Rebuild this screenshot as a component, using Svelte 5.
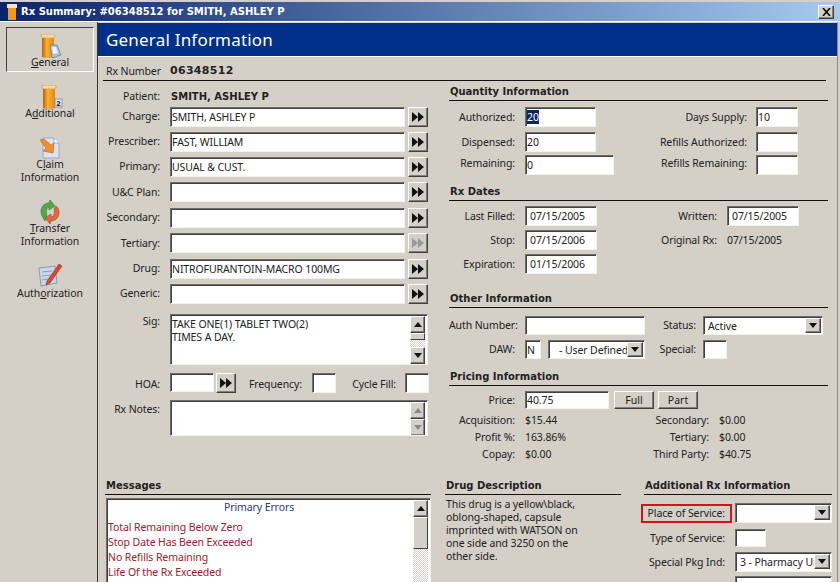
<script>
  const leftRows = [
    { label: 'Charge:', value: 'SMITH, ASHLEY P', cls: 'r25' },
    { label: 'Prescriber:', value: 'FAST, WILLIAM', cls: 'r25' },
    { label: 'Primary:', value: 'USUAL & CUST.', cls: 'r25' },
    { label: 'U&C Plan:', value: '', cls: 'r26' },
    { label: 'Secondary:', value: '', cls: 'r25' },
    { label: 'Tertiary:', value: '', cls: 'r26', off: true },
    { label: 'Drug:', value: 'NITROFURANTOIN-MACRO 100MG', cls: 'r25' },
    { label: 'Generic:', value: '', cls: 'r25' }
  ];
  const errors = ['Total Remaining Below Zero', 'Stop Date Has Been Exceeded', 'No Refills Remaining', 'Life Of the Rx Exceeded'];
</script>

{#snippet dbl(off)}
  <button class="btn go" class:off aria-label="next">
    <svg width="12" height="10" viewBox="0 0 12 10"><path d="M0 0l6 5-6 5zM6 0l6 5-6 5z" /></svg>
  </button>
{/snippet}
{#snippet arrow(dir, off)}
  <span class="sb" class:off>
    <svg width="8" height="5" viewBox="0 0 8 5"><path d={dir === 'up' ? 'M0 5l4-5 4 5z' : 'M0 0l4 5 4-5z'} /></svg>
  </span>
{/snippet}
{#snippet dd()}
  <span class="sb dd"><svg width="8" height="5" viewBox="0 0 8 5"><path d="M0 0l4 5 4-5z" /></svg></span>
{/snippet}
{#snippet bottle(badge)}
  <svg class="ico" width="26" height="25" viewBox="0 0 26 25">
    <defs>
      <linearGradient id="org" x1="0" x2="1" y1="0" y2="0">
        <stop offset="0" stop-color="#b8620a" /><stop offset=".4" stop-color="#fdb02e" /><stop offset="1" stop-color="#e08812" />
      </linearGradient>
    </defs>
    {#if badge === 'page'}
      <rect x="4" y="0" width="14" height="4" rx="1.500" fill="#f3d9a8" stroke="#c08a3c" stroke-width=".6" />
      <path d="M5 4h12v19q-6 2-12 0z" fill="url(#org)" />
      <path d="M13 11h7l4 10-9 3z" fill="#a9c0de" stroke="#64788f" stroke-width=".7" />
      <path d="M15 13h4l2 6-5 1z" fill="#eef4fb" />
    {:else}
      <rect x="5" y="0" width="14" height="4" rx="1.500" fill="#f3d9a8" stroke="#c08a3c" stroke-width=".6" />
      <path d="M6 4h12v19q-6 2-12 0z" fill="url(#org)" />
      <rect x="18" y="14" width="7" height="8" fill="#dfe8f4" stroke="#6b8099" stroke-width=".7" />
      <text x="19.300" y="20.500" class="two">2</text>
    {/if}
  </svg>
{/snippet}

<div class="win">
  <header class="title">
    <svg width="10" height="16" viewBox="0 0 10 16"><rect x="0" y="0" width="10" height="4" fill="#f5e2b8" /><rect x="1" y="4" width="8" height="12" fill="#ef9a1c" /></svg>
    <span class="ttext">Rx Summary: #06348512 for SMITH, ASHLEY P</span>
    <button class="btn close" aria-label="Close">
      <svg width="9" height="8" viewBox="0 0 9 8"><path d="M1 0l7 8M8 0L1 8" stroke="#000" stroke-width="1.500" fill="none" /></svg>
    </button>
  </header>

  <div class="body">
    <nav class="side">
      <div class="nav n1 active">
        {@render bottle('page')}
        <span><u>G</u>eneral</span>
      </div>
      <div class="nav n2">
        {@render bottle('two')}
        <span>A<u>d</u>ditional</span>
      </div>
      <div class="nav n3">
        <svg class="ico" width="24" height="24" viewBox="0 0 24 24">
          <path d="M5 1h11l5 5v15H5z" fill="#dbe5f2" stroke="#8fa0b8" stroke-width=".8" />
          <path d="M16 1v5h5" fill="#fff" stroke="#8fa0b8" stroke-width=".8" />
          <path d="M2 3l4-1 7 6 3-2-1 10-10-2 3-3z" fill="#f0902a" stroke="#c4571a" stroke-width=".6" />
        </svg>
        <span>C<u>l</u>aim<br />Information</span>
      </div>
      <div class="nav n4">
        <svg class="ico" width="24" height="24" viewBox="0 0 24 24">
          <path d="M4 16C1 9 5 3 11 3l1-3 5 6-6 4 0-3C8 8 8 12 9 16l-2 5C6 19 5 18 4 16z" fill="#55a84a" stroke="#2f7a30" stroke-width=".6" />
          <path d="M20 8c3 7-1 13-7 13l-1 3-5-6 6-4 0 3c3 0 4-4 3-8l2-3z" fill="#e2683c" stroke="#b04020" stroke-width=".6" />
        </svg>
        <span><u>T</u>ransfer<br />Information</span>
      </div>
      <div class="nav n5">
        <svg class="ico" width="26" height="24" viewBox="0 0 26 24">
          <path d="M2 5l16-2 2 17-16 3z" fill="#c9d6e8" stroke="#7b8ca5" stroke-width=".8" />
          <path d="M5 9l10-1M5 13l10-1M5 17l6-1" stroke="#8fa0b8" stroke-width="1" />
          <path d="M10 18L22 1l3 2-12 17-4 2z" fill="#d9482f" stroke="#a02a18" stroke-width=".6" />
        </svg>
        <span>Auth<u>o</u>rization</span>
      </div>
    </nav>

    <main class="main">
      <div class="hdr">General Information</div>
      <div class="rxnum">
        <span class="rxl">Rx Number</span><b class="rxv">06348512</b>
      </div>

      <div class="top">
        <section class="left">
          <div class="row patient"><span class="lab l58">Patient:</span><b class="pname">SMITH, ASHLEY P</b></div>
          {#each leftRows as r}
            <div class="row {r.cls}">
              <span class="lab l58">{r.label}</span>
              <div class="inp w235">{r.value}</div>
              {@render dbl(r.off)}
            </div>
          {/each}
          <div class="row sig">
            <span class="lab l58 tsig">Sig:</span>
            <div class="inp area h51">TAKE ONE(1) TABLET TWO(2)<br />TIMES A DAY.
              <div class="vs">
                {@render arrow('up')}
                <span class="thumb"></span>
                <span class="track"></span>
                {@render arrow('down')}
              </div>
            </div>
          </div>
          <div class="row hoa">
            <span class="lab l58">HOA:</span>
            <div class="inp w44"></div>
            {@render dbl()}
            <span class="lab freq">Frequency:</span>
            <div class="inp w24f"></div>
            <span class="lab cyc">Cycle Fill:</span>
            <div class="inp w24f"></div>
          </div>
          <div class="row notes">
            <span class="lab l58 tnotes">Rx Notes:</span>
            <div class="inp area h35">
              <div class="vs">
                {@render arrow('up', true)}
                {@render arrow('down', true)}
              </div>
            </div>
          </div>
        </section>

        <section class="right">
          <h3 class="sec">Quantity Information</h3>
          <div class="row q1"><span class="lab l66">Authorized:</span><div class="inp w71"><span class="sel">20</span></div><span class="lab l151">Days Supply:</span><div class="inp w42">10</div></div>
          <div class="row q2"><span class="lab l66">Dispensed:</span><div class="inp w71">20</div><span class="lab l151">Refills Authorized:</span><div class="inp w42"></div></div>
          <div class="row q3"><span class="lab l66">Remaining:</span><div class="inp w89">0</div><span class="lab l133">Refills Remaining:</span><div class="inp w42"></div></div>

          <h3 class="sec s2">Rx Dates</h3>
          <div class="row d1"><span class="lab l66">Last Filled:</span><div class="inp w72 pad">07/15/2005</div><span class="lab l120">Written:</span><div class="inp w72 pad">07/15/2005</div></div>
          <div class="row d2"><span class="lab l66">Stop:</span><div class="inp w72 pad">07/15/2006</div><span class="lab l120">Original Rx:</span><span class="val">07/15/2005</span></div>
          <div class="row d3"><span class="lab l66">Expiration:</span><div class="inp w72 pad">01/15/2006</div></div>

          <h3 class="sec s3">Other Information</h3>
          <div class="row o1"><span class="lab l66">Auth Number:</span><div class="inp w120"></div><span class="lab l48">Status:</span>
            <div class="inp w120 pad combo">Active{@render dd()}</div></div>
          <div class="row o2"><span class="lab l66">DAW:</span><div class="inp w15">N</div>
            <div class="inp w96 combo daw">- User Defined{@render dd()}</div>
            <span class="lab l48">Special:</span><div class="inp w24"></div></div>

          <h3 class="sec s4">Pricing Information</h3>
          <div class="row p1"><span class="lab l66">Price:</span><div class="inp w84">40.75</div><button class="btn txt">Full</button><button class="btn txt">Part</button></div>
          <div class="row p"><span class="lab l66">Acquisition:</span><span class="val v1">$15.44</span><span class="lab l76">Secondary:</span><span class="val">$0.00</span></div>
          <div class="row p"><span class="lab l66">Profit %:</span><span class="val v1">163.86%</span><span class="lab l76">Tertiary:</span><span class="val">$0.00</span></div>
          <div class="row p"><span class="lab l66">Copay:</span><span class="val v1">$0.00</span><span class="lab l76">Third Party:</span><span class="val">$40.75</span></div>
        </section>
      </div>

      <div class="bottom">
        <section class="msgs">
          <h3 class="sec">Messages</h3>
          <div class="inp mbox">
            <div class="mt">Primary Errors</div>
            {#each errors as e}<div class="err">{e}</div>{/each}
            <div class="vs">
              {@render arrow('up')}
              <span class="thumb big"></span>
              <span class="track"></span>
            </div>
          </div>
        </section>
        <section class="desc">
          <h3 class="sec">Drug Description</h3>
          <p>This drug is a yellow\black, oblong-shaped, capsule imprinted with WATSON on one side and 3250 on the other side.</p>
        </section>
        <section class="add">
          <h3 class="sec">Additional Rx Information</h3>
          <div class="row a1"><span class="lab pos">Place of Service:</span>
            <div class="inp w97 combo">{@render dd()}</div></div>
          <div class="row a2"><span class="lab l91">Type of Service:</span><div class="inp w31"></div></div>
          <div class="row a3"><span class="lab l91">Special Pkg Ind:</span>
            <div class="inp w97 pad combo">3 - Pharmacy Unit{@render dd()}</div></div>
          <div class="row a4"><span class="l91"></span><div class="inp w97"></div></div>
        </section>
      </div>
    </main>
  </div>
</div>

<style>
  :global(body) { margin: 0; background: #d4d0c8; }
  .win {
    width: 840px; height: 582px; overflow: hidden; box-sizing: border-box;
    background: #d4d0c8; color: #222; padding-top: 2px;
    font: 10.5px/13px "Noto Sans", Tahoma, sans-serif; letter-spacing: -0.1px;
  }
  .title {
    height: 19px; display: flex; align-items: center; gap: 4px; padding: 0 6px 0 7px;
    background: linear-gradient(90deg, #0a246a, #a6caf0);
    border-bottom: 1px solid #fff;
  }
  .ttext { color: #fff; font: bold 10px/19px "DejaVu Sans", sans-serif; letter-spacing: 0; white-space: nowrap; flex: 1; }
  .btn {
    display: flex; align-items: center; justify-content: center; padding: 0; margin: 0;
    background: #d4d0c8; border: 1px solid; border-color: #fff #404040 #404040 #fff;
    box-shadow: inset -1px -1px 0 #808080; font: inherit; color: #222;
  }
  .close { width: 16px; height: 14px; }
  .body { display: flex; height: 560px; }

  .side { width: 98px; flex: none; box-sizing: border-box; border-right: 1px solid #333; padding: 5px 4px 0 6px; }
  .nav { display: flex; flex-direction: column; align-items: center; text-align: center; width: 88px; box-sizing: border-box; }
  .nav span { display: block; }
  .ico { display: block; }
  .active { height: 45px; border: 1px solid; border-color: #404040 #fff #fff #404040; padding-top: 6px; justify-content: flex-start; }
  .active span { margin-top: -3px; }
  .n2 { margin-top: 13px; }
  .n2 span { margin-top: -3px; }
  .n3 { margin-top: 17px; }
  .n3 svg { margin-bottom: -3px; }
  .n4 { margin-top: 16px; }
  .n4 svg { margin-bottom: -2px; }
  .n5 { margin-top: 15px; }
  .n5 svg { margin-bottom: 0; }
  .two { font: bold 6.500px "DejaVu Sans", sans-serif; fill: #223; }

  .main { flex: 1; min-width: 0; box-sizing: border-box; padding: 1px 0 0 0; border-right: 1px solid #888; margin-right: 2px; }
  .hdr {
    height: 33px; padding-left: 8px; background: #003087; color: #fff;
    border-bottom: 1px solid #fff; font: 17px/34px "Noto Sans", sans-serif; letter-spacing: .2px;
  }
  .rxnum {
    height: 24px; box-sizing: border-box; margin: 0 11px 0 5px; border-bottom: 1px solid #111; display: flex; align-items: center; padding: 5px 0 0 3px;
  }
  .rxl { width: 64px; }
  .rxv { font: bold 11px/14px "DejaVu Sans", sans-serif; letter-spacing: .3px; }

  .top { display: flex; height: 398px; padding-left: 7px; }
  .left { width: 325px; flex: none; }
  .right { width: 379px; margin-left: 19px; }
  .row { display: flex; align-items: center; box-sizing: border-box; }
  .lab { flex: none; text-align: right; white-space: nowrap; box-sizing: border-box; }
  .l58 { width: 55px; margin-right: 10px; }
  .tsig { padding-top: 1px; }
  .tnotes { padding-top: 3px; }
  .patient { height: 23px; padding-top: 7px; }
  .pname { font: bold 10px/13px "DejaVu Sans", sans-serif; letter-spacing: 0; margin-left: 1px; }
  .r25 { height: 25px; }
  .r26 { height: 26px; }
  .inp {
    height: 20px; box-sizing: border-box; background: #fff; flex: none; position: relative;
    border: 1px solid; border-color: #6e6e6e #f4f2ee #f4f2ee #6e6e6e;
    box-shadow: inset 1px 1px 0 #404040; padding: 3px 0 0 1px; white-space: nowrap; overflow: hidden;
  }
  .pad { padding-left: 4px; }
  .go { width: 20px; height: 20px; margin-left: 3px; flex: none; }
  .go svg { fill: #111; }
  .off svg { fill: #999; }
  .w235 { width: 235px; }
  .sig { height: 51px; margin-top: 8px; align-items: flex-start; }
  .area { width: 258px; padding-top: 3px; padding-right: 20px; }
  .h51 { height: 51px; }
  .h35 { height: 36px; }
  .vs { position: absolute; top: 1px; bottom: 0; right: 1px; width: 16px; display: flex; flex-direction: column; background: #fff; }
  .sb {
    width: 15px; height: 17px; flex: none; display: flex; align-items: center; justify-content: center; box-sizing: border-box;
    background: #d4d0c8; border: 1px solid; border-color: #fff #404040 #404040 #fff; box-shadow: inset -1px -1px 0 #808080;
  }
  .sb svg { fill: #111; }
  .sb.off svg { fill: #888; }
  .thumb { height: 7px; box-sizing: border-box; width: 15px; background: #d4d0c8; border: 1px solid; border-color: #fff #404040 #404040 #fff; }
  .thumb.big { height: 32px; }
  .track { flex: 1; background: repeating-conic-gradient(#d4d0c8 0 25%, #fff 0 50%) 0 0 / 2px 2px; width: 15px; }
  .hoa { height: 19px; margin-top: 8px; }
  .hoa .lab { padding-top: 3px; }
  .w44 { width: 44px; height: 19px; }
  .hoa .go { margin-left: 2px; }
  .freq { width: 66px; margin-right: 10px; }
  .w24f { width: 24px; height: 20px; }
  .cyc { width: 60px; margin-right: 9px; }
  .notes { margin-top: 8px; align-items: flex-start; }

  .sec {
    margin: 0; padding: 0 0 2px 1px; font: bold 10px/13px "DejaVu Sans", sans-serif; letter-spacing: 0; color: #222; border-bottom: 1px solid #111;
  }
  .right .sec:first-child { margin-top: 4px; }
  .l66 { width: 66px; margin-right: 10px; }
  .l151 { width: 151px; margin-right: 9px; }
  .l133 { width: 133px; margin-right: 9px; }
  .l120 { width: 120px; margin-right: 10px; }
  .l48 { width: 51px; margin-right: 7px; }
  .l76 { width: 76px; }
  .l91 { width: 81px; margin-right: 10px; }
  .w71 { width: 71px; }
  .w72 { width: 72px; }
  .w89 { width: 89px; }
  .w42 { width: 42px; }
  .w120 { width: 120px; }
  .w15 { width: 16px; margin-right: 7px; }
  .w96 { width: 97px; }
  .w24 { width: 24px; }
  .w84 { width: 84px; height: 18px; padding-top: 2px; }
  .w97 { width: 97px; }
  .w31 { width: 31px; height: 18px; }
  .sel { background: #0a246a; color: #fff; }
  .q1 { height: 20px; margin-top: 6px; }
  .q2 { height: 20px; margin-top: 5px; }
  .q3 { height: 20px; margin-top: 3px; }
  .q3 .lab { padding-bottom: 3px; }
  .s2 { margin-top: 10px; }
  .d1 { height: 20px; margin-top: 5px; }
  .d2 { height: 20px; margin-top: 4px; }
  .d3 { height: 20px; margin-top: 4px; }
  .s3 { margin-top: 18px; }
  .o1 { height: 19px; margin-top: 8px; }
  .o1 .inp, .o2 .inp { height: 19px; }
  .o2 { height: 19px; margin-top: 5px; }
  .combo { padding-right: 18px; overflow: hidden; }
  .dd { position: absolute; right: 1px; top: 1px; height: 15px; width: 16px; }
  .daw { padding-left: 10px; }
  .s4 { margin-top: 11px; }
  .p1 { height: 18px; margin-top: 5px; }
  .txt { width: 40px; height: 18px; margin-left: 5px; }
  .txt + .txt { margin-left: 4px; }
  .p { height: 17px; }
  .p1 + .p { margin-top: 3px; }
  .v1 { width: 108px; }
  .p .val:last-child { margin-left: 10px; }

  .bottom { display: flex; padding-left: 7px; }
  .msgs { width: 326px; flex: none; }
  .mbox { width: 325px; height: 90px; margin: 3px 0 0 1px; padding: 2px 20px 0 1px; }
  .mt { text-align: center; color: #2a3a78; margin: 0 0 6px; }
  .err { height: 15px; line-height: 15px; color: #a8142c; }
  .desc { width: 176px; margin-left: 14px; flex: none; }
  .desc p { margin: 3px 0 0 1px; width: 135px; line-height: 13px; }
  .add { width: 188px; margin-left: 23px; flex: none; }
  .pos { width: 91px; height: 19px; margin: 0 3px 0 -3px; border: 2px solid #d0141c; padding: 1px 5px 0 0; line-height: 13px; }
  .a1 { height: 20px; margin-top: 8px; }
  .a1 .inp { height: 20px; }
  .a2 { height: 18px; margin-top: 6px; }
  .a3 { height: 20px; margin-top: 5px; }
  .a4 { height: 20px; margin-top: 4px; }
</style>
